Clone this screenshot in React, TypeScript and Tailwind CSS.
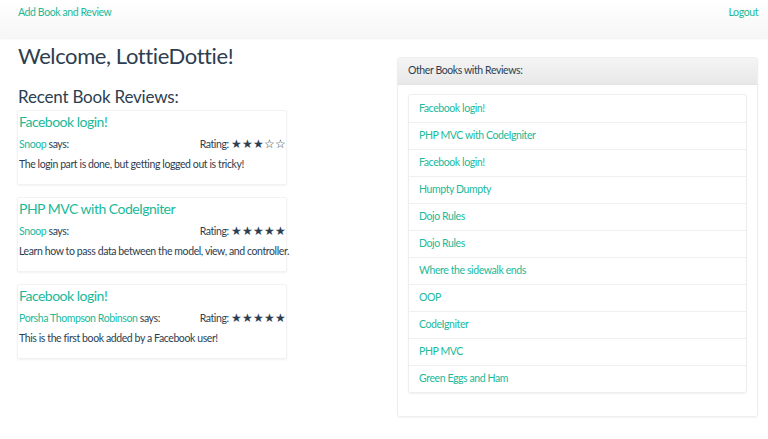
const reviews = [
  { title: "Facebook login!", user: "Snoop", rating: 3, text: "The login part is done, but getting logged out is tricky!" },
  { title: "PHP MVC with CodeIgniter", user: "Snoop", rating: 5, text: "Learn how to pass data between the model, view, and controller." },
  { title: "Facebook login!", user: "Porsha Thompson Robinson", rating: 5, text: "This is the first book added by a Facebook user!" },
];

const others = [
  "Facebook login!",
  "PHP MVC with CodeIgniter",
  "Facebook login!",
  "Humpty Dumpty",
  "Dojo Rules",
  "Dojo Rules",
  "Where the sidewalk ends",
  "OOP",
  "CodeIgniter",
  "PHP MVC",
  "Green Eggs and Ham",
];

const Stars = ({ n }: { n: number }) => (
  <span className="text-[12px] tracking-[0px]">
    {[0, 1, 2, 3, 4].map((i) => (
      <span key={i}>{i < n ? "★" : "☆"}</span>
    ))}
  </span>
);

export default function App() {
  return (
    <div className="min-h-[439px] bg-white text-[#2c3e50] font-['Lato','Open_Sans',sans-serif] text-[10.5px] tracking-[-0.4px]">
      {/* Navbar */}
      <div className="h-[38px] flex justify-between px-[18px] pt-[5px] bg-gradient-to-b from-white to-[#f6f6f6] shadow-[0_1px_2px_rgba(0,0,0,0.06)]">
        <a className="text-[#20b99a] leading-[14px]">Add Book and Review</a>
        <a className="text-[#20b99a] leading-[14px] mr-[-8px]">Logout</a>
      </div>

      <div className="flex pl-[18px] pr-[10px]">
        {/* Left column */}
        <div className="w-[269px]">
          <h1 className="text-[22px] tracking-[-0.4px] leading-[28px] mt-[4px]">Welcome, LottieDottie!</h1>
          <h3 className="text-[17px] tracking-[-0.2px] leading-[22px] mt-[16px]">Recent Book Reviews:</h3>
          <div className="mt-[2px] flex flex-col gap-[12px]">
            {reviews.map((r, i) => (
              <div key={i} className="h-[75px] border border-[#f2f2f2] shadow-[0_1px_2px_rgba(0,0,0,0.05)] rounded-[2px] ml-[-1px] pl-[1px]">
                <div className="text-[14px] tracking-[-0.5px] leading-[18px] text-[#20b99a] mt-[2px]">{r.title}</div>
                <div className="flex justify-between items-center mt-[6px] leading-[14px]">
                  <span>
                    <a className="text-[#20b99a]">{r.user}</a> says:
                  </span>
                  <span>
                    Rating: <Stars n={r.rating} />
                  </span>
                </div>
                <div className="mt-[6px] leading-[14px] whitespace-nowrap">{r.text}</div>
              </div>
            ))}
          </div>
        </div>

        {/* Right column */}
        <div className="ml-auto w-[361px] mt-[19px]">
          <div className="h-[360px] border border-[#eeeeee] rounded-[3px] shadow-[0_1px_2px_rgba(0,0,0,0.05)]">
            <div className="h-[27px] bg-gradient-to-b from-[#f5f5f5] to-[#e8e8e8] border-b border-[#e3e3e3] px-[10px] flex items-center">
              Other Books with Reviews:
            </div>
            <div className="px-[10px] pt-[9px]">
              <div className="border border-[#eeeeee] rounded-[3px] shadow-[0_1px_2px_rgba(0,0,0,0.06)]">
                {others.map((t, i) => (
                  <div key={i} className={"h-[27px] flex items-center px-[10px] text-[#20b99a] " + (i > 0 ? "border-t border-[#f0f0f0]" : "")}>
                    {t}
                  </div>
                ))}
              </div>
            </div>
          </div>
        </div>
      </div>
    </div>
  );
}
